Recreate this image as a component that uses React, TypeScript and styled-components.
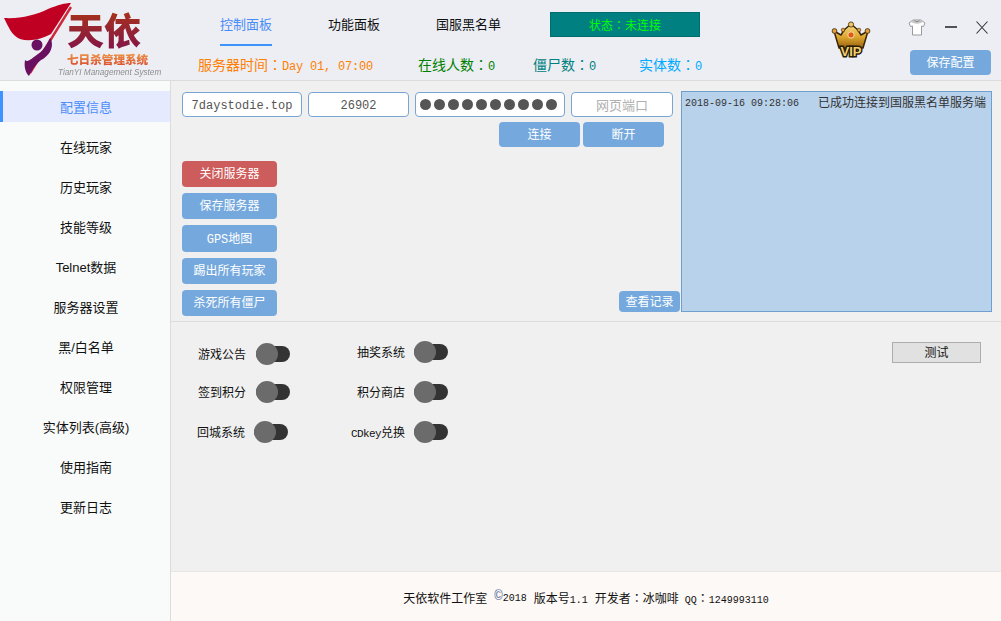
import React from 'react';
import styled, {createGlobalStyle} from 'styled-components';

const CJK = '"Liberation Mono", "Noto Sans CJK SC", monospace';

const GlobalStyle = createGlobalStyle`
	html, body {
		margin: 0;
		padding: 0;
		background: #f0f0f0;
	}
	* {
		box-sizing: border-box;
	}
`;

const Window = styled.div`
	display: flex;
	flex-direction: column;
	width: 1001px;
	height: 621px;
	overflow: hidden;
	font-family: ${CJK};
	font-size: 13px;
	color: #111;
`;

// Header
const Header = styled.header`
	display: flex;
	flex: none;
	height: 81px;
	background: #eceef4;
	border-bottom: 1px solid #dcdcdc;
`;
const LogoBox = styled.div`
	flex: none;
	width: 170px;
	height: 80px;
	svg {
		filter: blur(0.35px);
	}
`;
const HeaderMiddle = styled.div`
	display: flex;
	flex: none;
	flex-direction: column;
	width: 640px;
`;
const Tabs = styled.nav`
	display: flex;
	align-items: flex-start;
	height: 46px;
	padding-left: 50px;
`;
const Tab = styled.div<{$active?: boolean; $gap: number}>`
	flex: none;
	height: 34px;
	margin: 12px ${(p) => p.$gap}px 0 0;
	line-height: 27px;
	color: ${(p) => (p.$active ? '#4a8df8' : '#111')};
	border-bottom: 2px solid ${(p) => (p.$active ? '#3f93ff' : 'transparent')};
`;
const Status = styled.div`
	flex: none;
	width: 150px;
	height: 25px;
	margin-top: 12px;
	line-height: 23px;
	text-align: center;
	font-size: 12px;
	color: #00ff00;
	background: #008080;
	border: 1px solid #006e6e;
`;
const Stats = styled.div`
	display: flex;
	height: 34px;
	padding: 9px 0 0 28px;
	font-size: 14px;
	line-height: 19px;
`;
const Stat = styled.div<{$color: string; $width: number}>`
	flex: none;
	width: ${(p) => p.$width}px;
	color: ${(p) => p.$color};
	white-space: nowrap;
`;
const Mono = styled.span`
	font-size: 12px;
	letter-spacing: -0.2px;
`;
// centred full-width colon, as the reference draws it
const Colon = styled.span`
	font-family: "Noto Sans CJK TC", sans-serif;
`;
const HeaderRight = styled.div`
	display: flex;
	flex: 1;
	flex-direction: column;
	align-items: flex-start;
	position: relative;
`;
const Crown = styled.svg`
	position: absolute;
	left: 21px;
	top: 21px;
`;
const WindowButtons = styled.div`
	display: flex;
	align-items: center;
	gap: 19px;
	height: 30px;
	margin: 12px 0 8px 98px;
`;
const BlueButton = styled.div<{$width: number; $height?: number; $red?: boolean}>`
	flex: none;
	width: ${(p) => p.$width}px;
	height: ${(p) => p.$height ?? 25}px;
	line-height: ${(p) => (p.$height ?? 25) + 3}px;
	text-align: center;
	font-size: 12px;
	color: #fff;
	background: ${(p) => (p.$red ? '#cd5c5c' : '#75a9dd')};
	border-radius: 4px;
	white-space: nowrap;
`;
const SaveButton = styled(BlueButton)`
	margin-left: 100px;
`;

// Body
const Body = styled.div`
	display: flex;
	flex: 1;
	min-height: 0;
`;
const Sidebar = styled.aside`
	flex: none;
	width: 171px;
	padding-top: 10px;
	font-family: "Liberation Sans", "Noto Sans CJK SC", sans-serif;
	background: #f9fbfb;
	border-right: 1px solid #dcdcdc;
`;
const NavItem = styled.div<{$active?: boolean}>`
	height: 31px;
	margin-bottom: 9px;
	line-height: 33px;
	text-align: center;
	color: ${(p) => (p.$active ? '#4a8df8' : '#111')};
	background: ${(p) => (p.$active ? '#e6eafe' : 'transparent')};
	border-left: 3px solid ${(p) => (p.$active ? '#3f93ff' : 'transparent')};
	padding-right: 1px;
`;
const Content = styled.main`
	display: flex;
	flex: 1;
	flex-direction: column;
	min-width: 0;
`;
const TopPanel = styled.section`
	display: flex;
	flex: none;
	height: 241px;
	padding: 10px 9px 9px 0;
	border-bottom: 1px solid #dcdcdc;
`;
const ConnectColumn = styled.div`
	display: flex;
	flex: none;
	flex-direction: column;
	width: 510px;
	padding-top: 1px;
`;
const Fields = styled.div`
	display: flex;
	gap: 6px;
	margin-left: 11px;
`;
const Field = styled.div<{$width: number; $muted?: boolean}>`
	display: flex;
	flex: none;
	align-items: center;
	justify-content: center;
	width: ${(p) => p.$width}px;
	height: 25px;
	padding-top: 2px;
	font-size: 12px;
	color: ${(p) => (p.$muted ? '#b0b0b0' : '#555')};
	background: #fff;
	border: 1px solid #76a5d6;
	border-radius: 4px;
`;
const MutedLabel = styled.span`
	margin-top: -2px;
	font-size: 13px;
`;
const Dots = styled.div`
	display: flex;
	gap: 3px;
	margin: -2px 3px 0 0;
`;
const Dot = styled.span`
	flex: none;
	width: 11px;
	height: 11px;
	background: #555;
	border-radius: 50%;
`;
const ConnectRow = styled.div`
	display: flex;
	justify-content: flex-end;
	gap: 3px;
	margin: 5px 17px 0 0;
`;
const ActionsRow = styled.div`
	display: flex;
	align-items: flex-end;
	justify-content: space-between;
	margin: 14px 1px 0 11px;
`;
const Actions = styled.div`
	display: flex;
	flex-direction: column;
	gap: 6px;
`;
const LogButton = styled(BlueButton)`
	margin-bottom: 4px;
`;
const LogBox = styled.div`
	display: flex;
	flex: none;
	justify-content: space-between;
	width: 311px;
	height: 221px;
	padding: 5px 5px 0 3px;
	line-height: 14px;
	font-size: 12px;
	color: #333;
	background: #b9d2ec;
	border: 1px solid #6f9fd0;
`;
const LogTime = styled.span`
	font-size: 10px;
`;
const BottomPanel = styled.section`
	display: flex;
	flex: 1;
	align-items: flex-start;
	justify-content: space-between;
	padding: 19px 20px 0 0;
`;
const ToggleGrid = styled.div`
	display: grid;
	grid-template-columns: 119px 158px;
	grid-auto-rows: 40px;
	align-items: start;
`;
const ToggleItem = styled.div<{$down?: number; $left?: number; $gap?: number}>`
	display: flex;
	align-items: center;
	justify-content: flex-end;
	gap: ${(p) => p.$gap ?? 10}px;
	height: 22px;
	margin-top: ${(p) => p.$down ?? 0}px;
	margin-right: ${(p) => p.$left ?? 0}px;
	font-size: 12px;
	white-space: nowrap;
`;
const SmallLatin = styled.span`
	font-size: 11px;
	letter-spacing: -0.6px;
`;
const Track = styled.div`
	flex: none;
	display: flex;
	align-items: center;
	width: 34px;
	height: 16px;
	background: #333;
	border-radius: 8px;
`;
const Knob = styled.div`
	flex: none;
	width: 22px;
	height: 22px;
	background: #6b6b6b;
	border-radius: 50%;
`;
const TestButton = styled.div`
	flex: none;
	width: 89px;
	height: 21px;
	margin-top: 1px;
	line-height: 22px;
	text-align: center;
	font-size: 12px;
	background: #e1e1e1;
	border: 1px solid #adadad;
`;
const Footer = styled.footer`
	display: flex;
	flex: none;
	align-items: center;
	justify-content: center;
	height: 50px;
	padding-top: 3px;
	font-size: 12px;
	background: #fdf9f6;
	border-top: 1px solid #e6e6e6;
`;
const FooterBit = styled.span<{$gap?: number}>`
	margin-left: ${(p) => p.$gap ?? 0}px;
	white-space: nowrap;
`;
const Copy = styled.span`
	align-self: flex-start;
	margin: 14px 0 0 7px;
	font-size: 14px;
	line-height: 14px;
	color: #5a6fa0;
`;
const Small = styled.span`
	font-size: 10px;
`;

function Logo() {
	return (
		<LogoBox>
			<svg width="170" height="80" viewBox="0 0 170 80">
				<defs>
					<linearGradient id="name" x1="0" y1="0" x2="0" y2="1">
						<stop offset="0" stopColor="#b03a10" />
						<stop offset="1" stopColor="#7d1050" />
					</linearGradient>
					<linearGradient id="sub" x1="0" y1="0" x2="0" y2="1">
						<stop offset="0" stopColor="#f2a24a" />
						<stop offset="1" stopColor="#d8482c" />
					</linearGradient>
				</defs>
				<path
					d="M4 18 C20 19 36 15 48 9 C58 5 65 3 71 3 L51 34 C42 39 30 42 20 39 C12 36 8 26 4 18Z"
					fill="#c00022"
				/>
				<path d="M71 7 L30 73" stroke="#d02838" strokeWidth="2.4" />
				<circle cx="37" cy="45" r="5.5" fill="#6a1060" />
				<path
					d="M50 38 C55 45 50 56 41 60 C37 63 33 68 29 76 C25 72 24 66 25 60 C28 63 32 58 38 54 C44 50 47 44 50 38Z"
					fill="#6a1060"
				/>
				<text
					x="67"
					y="45"
					fontFamily="Noto Sans CJK SC"
					fontWeight="900"
					fontSize="37"
					fill="url(#name)">
					天依
				</text>
				<text
					x="67"
					y="64"
					fontFamily="Noto Sans CJK SC"
					fontWeight="900"
					fontSize="11.6"
					fill="url(#sub)">
					七日杀管理系统
				</text>
				<text
					x="58"
					y="74.5"
					fontFamily="Liberation Sans"
					fontStyle="italic"
					fontSize="8.2"
					fill="#8d8d8d">
					TianYI Management System
				</text>
			</svg>
		</LogoBox>
	);
}

function CrownIcon() {
	return (
		<Crown width="40" height="38" viewBox="0 0 40 38">
			<defs>
				<linearGradient id="gold" x1="0" y1="0" x2="0" y2="1">
					<stop offset="0" stopColor="#f8e08a" />
					<stop offset="0.55" stopColor="#dba52e" />
					<stop offset="1" stopColor="#9a6210" />
				</linearGradient>
			</defs>
			<path
				d="M3 10 L10 14 L13 9 L20 3 L27 9 L30 14 L37 10 L32 27 L8 27Z"
				fill="url(#gold)"
				stroke="#3a2608"
				strokeWidth="1.5"
				strokeLinejoin="round"
			/>
			<circle cx="20" cy="3.5" r="2.6" fill="#f0c868" stroke="#3a2608" strokeWidth="0.8" />
			<circle cx="3.5" cy="10" r="2.4" fill="#e8a040" stroke="#3a2608" strokeWidth="0.8" />
			<circle cx="36.5" cy="10" r="2.4" fill="#e8a040" stroke="#3a2608" strokeWidth="0.8" />
			<circle cx="12" cy="9" r="1.8" fill="#e8a040" stroke="#3a2608" strokeWidth="0.6" />
			<circle cx="28" cy="9" r="1.8" fill="#e8a040" stroke="#3a2608" strokeWidth="0.6" />
			<circle cx="20" cy="14" r="3.2" fill="#e2591c" stroke="#f7e09a" />
			<text
				x="20"
				y="35"
				textAnchor="middle"
				fontFamily="Liberation Sans"
				fontWeight="700"
				fontSize="13"
				fill="#f2d070"
				stroke="#2a1c08"
				strokeWidth="3"
				paintOrder="stroke">
				VIP
			</text>
		</Crown>
	);
}

function ShirtIcon() {
	return (
		<svg width="18" height="17" viewBox="0 0 18 17">
			<path
				d="M5 1 L13 1 L17 4 L15.5 7.5 L13.5 7 L13.5 16 L4.5 16 L4.5 7 L2.5 7.5 L1 4Z"
				fill="#fff"
				stroke="#9a9a9a"
			/>
			<path d="M5 1 L13 1 L15 3 Q9 6.5 3 3Z" fill="#c4c4c4" />
			<path d="M6.5 1.5 Q9 4 11.5 1.5" fill="none" stroke="#8a8a8a" />
		</svg>
	);
}

function Toggle({
	label,
	down,
	left,
	gap,
}: {
	label: React.ReactNode;
	down?: number;
	left?: number;
	gap?: number;
}) {
	return (
		<ToggleItem $down={down} $left={left} $gap={gap}>
			<span>{label}</span>
			<Track>
				<Knob />
			</Track>
		</ToggleItem>
	);
}

const navItems = [
	'配置信息',
	'在线玩家',
	'历史玩家',
	'技能等级',
	'Telnet数据',
	'服务器设置',
	'黑/白名单',
	'权限管理',
	'实体列表(高级)',
	'使用指南',
	'更新日志',
];

function App() {
	return (
		<Window>
			<GlobalStyle />
			<Header>
				<Logo />
				<HeaderMiddle>
					<Tabs>
						<Tab $active $gap={56}>控制面板</Tab>
						<Tab $gap={56}>功能面板</Tab>
						<Tab $gap={49}>国服黑名单</Tab>
						<Status>状态<Colon>：</Colon>未连接</Status>
					</Tabs>
					<Stats>
						<Stat $color="#ff8000" $width={220}>
							服务器时间<Colon>：</Colon><Mono>Day 01, 07:00</Mono>
						</Stat>
						<Stat $color="#008000" $width={115}>
							在线人数<Colon>：</Colon><Mono>0</Mono>
						</Stat>
						<Stat $color="#008080" $width={106}>
							僵尸数<Colon>：</Colon><Mono>0</Mono>
						</Stat>
						<Stat $color="#00aaff" $width={80}>
							实体数<Colon>：</Colon><Mono>0</Mono>
						</Stat>
					</Stats>
				</HeaderMiddle>
				<HeaderRight>
					<CrownIcon />
					<WindowButtons>
						<ShirtIcon />
						<svg width="12" height="2" viewBox="0 0 12 2">
							<path d="M0 1H12" stroke="#111" strokeWidth="1.4" />
						</svg>
						<svg width="12" height="13" viewBox="0 0 12 13">
							<path d="M0.5 0.5L11.5 12.5M11.5 0.5L0.5 12.5" stroke="#333" strokeWidth="1.1" />
						</svg>
					</WindowButtons>
					<SaveButton $width={81}>保存配置</SaveButton>
				</HeaderRight>
			</Header>
			<Body>
				<Sidebar>
					{navItems.map((item, i) => (
						<NavItem key={item} $active={i === 0}>
							{item}
						</NavItem>
					))}
				</Sidebar>
				<Content>
					<TopPanel>
						<ConnectColumn>
							<Fields>
								<Field $width={120}>7daystodie.top</Field>
								<Field $width={101}>26902</Field>
								<Field $width={150}>
									<Dots>
										{Array.from({length: 10}, (_, i) => (
											<Dot key={i} />
										))}
									</Dots>
								</Field>
								<Field $width={102} $muted>
									<MutedLabel>网页端口</MutedLabel>
								</Field>
							</Fields>
							<ConnectRow>
								<BlueButton $width={81}>连接</BlueButton>
								<BlueButton $width={81}>断开</BlueButton>
							</ConnectRow>
							<ActionsRow>
								<Actions>
									<BlueButton $width={95} $height={26} $red>关闭服务器</BlueButton>
									<BlueButton $width={95} $height={26}>保存服务器</BlueButton>
									<BlueButton $width={95} $height={27}>GPS地图</BlueButton>
									<BlueButton $width={95} $height={26}>踢出所有玩家</BlueButton>
									<BlueButton $width={95} $height={26}>杀死所有僵尸</BlueButton>
								</Actions>
								<LogButton $width={61} $height={21}>查看记录</LogButton>
							</ActionsRow>
						</ConnectColumn>
						<LogBox>
							<LogTime>2018-09-16 09:28:06</LogTime>
							<span>已成功连接到国服黑名单服务端</span>
						</LogBox>
					</TopPanel>
					<BottomPanel>
						<ToggleGrid>
							<Toggle label="游戏公告" down={2} />
							<Toggle label="抽奖系统" gap={9} />
							<Toggle label="签到积分" />
							<Toggle label="积分商店" gap={9} />
							<Toggle label="回城系统" left={2} gap={9} />
							<Toggle label={<><SmallLatin>CDkey</SmallLatin>兑换</>} gap={9} />
						</ToggleGrid>
						<TestButton>测试</TestButton>
					</BottomPanel>
					<Footer>
						<FooterBit>天依软件工作室</FooterBit>
						<Copy>©</Copy>
						<FooterBit><Small>2018</Small></FooterBit>
						<FooterBit $gap={7}>版本号<Small>1.1</Small></FooterBit>
						<FooterBit $gap={7}>开发者<Colon>：</Colon>冰咖啡</FooterBit>
						<FooterBit $gap={6}><Small>QQ</Small><Colon>：</Colon><Small>1249993110</Small></FooterBit>
					</Footer>
				</Content>
			</Body>
		</Window>
	);
}

export default App;
